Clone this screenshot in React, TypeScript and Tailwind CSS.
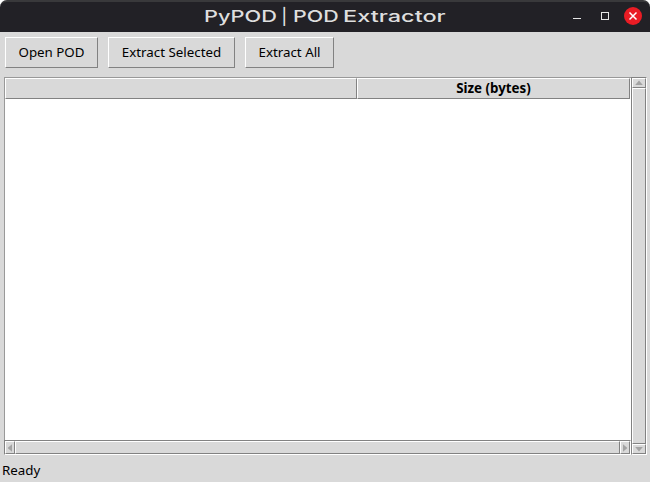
import React from "react";

const raised = "border border-t-white border-l-white border-r-[#828282] border-b-[#828282] bg-[#d9d9d9]";
const sunken = "border border-t-[#828282] border-l-[#828282] border-r-white border-b-white bg-[#c3c3c3]";

function ToolButton({ label, width }: { label: string; width: string }) {
  return (
    <button className={`${raised} ${width} flex h-[31px] items-center justify-center whitespace-nowrap pt-px text-[13.33px] leading-none`}>
      {label}
    </button>
  );
}

function Arrow({ rotate, className }: { rotate: string; className: string }) {
  return (
    <div className={`${raised} ${className} flex shrink-0 items-center justify-center`}>
      <svg width="8" height="8" viewBox="0 0 8 8" className={`shrink-0 ${rotate}`}>
        <polygon points="4,1.6 7.8,6 0.2,6" fill="#a3a3a3" />
      </svg>
    </div>
  );
}

function TitleWord({ text, box, scale }: { text: string; box: string; scale: string }) {
  return (
    <span className={`${box} inline-block shrink-0 whitespace-nowrap`}>
      <span className={`${scale} inline-block origin-left`}>{text}</span>
    </span>
  );
}

function TitleBar() {
  return (
    <header className="grid h-8 grid-cols-[1fr_243px_1fr] items-center rounded-t-[7px] border-t-2 border-t-[#39393b] bg-[#222126]">
      <span />
      <h1 className="flex h-[30px] items-center pb-[3px] font-['Inter'] text-[16px] font-medium leading-none text-[#dedede]">
        <TitleWord text="PyPOD" box="w-[78px]" scale="scale-x-[1.36]" />
        <TitleWord text="|" box="w-[11px]" scale="scale-x-100" />
        <TitleWord text="POD" box="w-[50px]" scale="scale-x-[1.34]" />
        <TitleWord text="Extractor" box="w-[104px]" scale="scale-x-[1.47]" />
      </h1>
      <div className="flex h-[30px] items-center justify-end gap-[10px] pr-2 pb-[2px]">
        <svg width="18" height="18" viewBox="0 0 18 18">
          <rect x="5" y="11" width="8" height="1" fill="#e6e6e6" />
        </svg>
        <svg width="18" height="18" viewBox="0 0 18 18">
          <rect x="5.5" y="5.5" width="7" height="7" fill="none" stroke="#e6e6e6" />
        </svg>
        <svg width="18" height="18" viewBox="0 0 18 18">
          <circle cx="9" cy="9" r="9" fill="#ea1c24" />
          <path d="M5.5 5.5l7 7M12.5 5.5l-7 7" stroke="#fff" strokeWidth="1.5" />
        </svg>
      </div>
    </header>
  );
}

export default function App() {
  return (
    <div className="bg-white">
      <div className="flex h-[482px] w-[650px] flex-col rounded-t-[7px] bg-[#d9d9d9] font-['Noto_Sans',sans-serif] text-[13.33px] text-black">
        <TitleBar />
        <div className="flex gap-[10px] px-[5px] pt-[5px]">
          <ToolButton label="Open POD" width="w-[93px]" />
          <ToolButton label="Extract Selected" width="w-[127px]" />
          <ToolButton label="Extract All" width="w-[89px]" />
        </div>
        <main className="mt-[9px] ml-1 flex h-[378px] w-[643px]">
          <div className="flex w-[627px] flex-col">
            <div className="flex h-[363px] flex-col border-t border-l border-[#999999] bg-white pr-px">
              <div className="flex h-[21px]">
                <div className={`${raised} w-[352px]`} />
                <div className={`${raised} flex flex-1 items-center justify-center pt-px text-[13.33px] font-bold leading-none`}>
                  Size (bytes)
                </div>
              </div>
            </div>
            <div className={`${sunken} flex h-[15px]`}>
              <Arrow rotate="-rotate-90" className="w-[10px]" />
              <div className={`${raised} flex-1`} />
              <Arrow rotate="rotate-90" className="w-[10px]" />
            </div>
          </div>
          <div className={`${sunken} flex w-4 flex-col`}>
            <Arrow rotate="rotate-0" className="h-[10px]" />
            <div className={`${raised} flex-1`} />
            <Arrow rotate="rotate-180" className="h-[10px]" />
          </div>
        </main>
        <footer className="mt-[6px] flex h-5 items-center pl-[2px] leading-none">Ready</footer>
      </div>
    </div>
  );
}
